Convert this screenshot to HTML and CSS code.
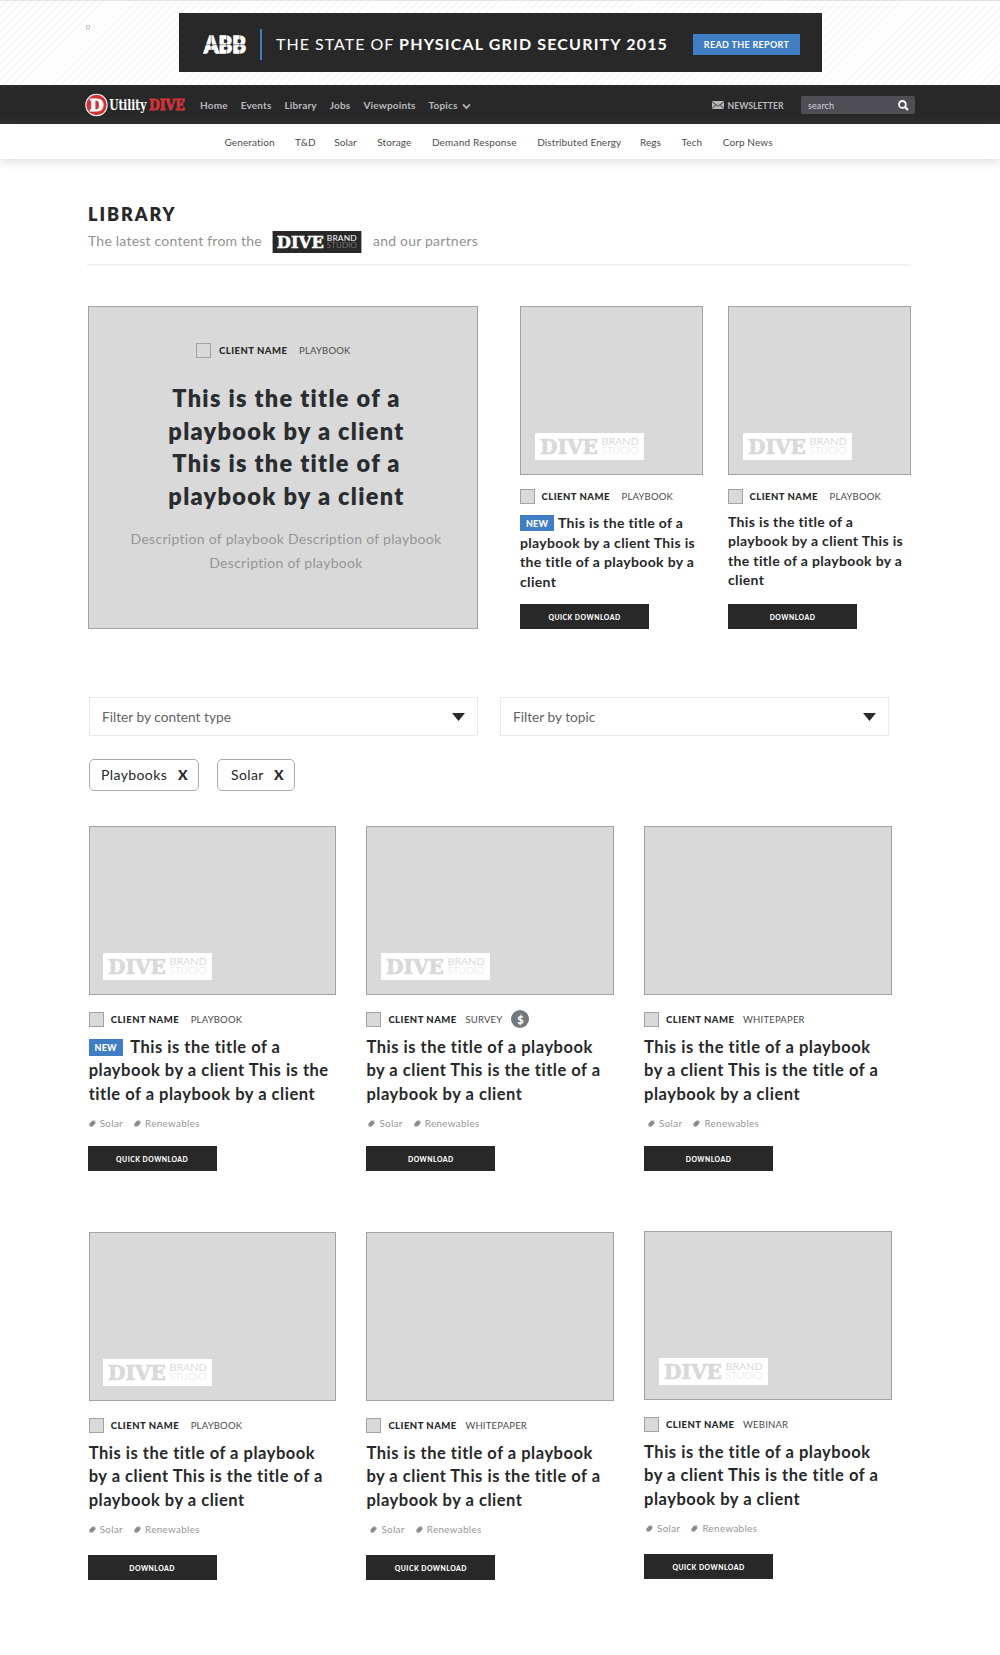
FILE: index.html
```html
<!DOCTYPE html>
<html lang="en">
<head>
<meta charset="utf-8">
<title>Utility Dive Library</title>
<link rel="stylesheet" href="styles.css">
</head>
<body>
<svg class="defs" width="0" height="0" aria-hidden="true">
  <symbol id="studio" viewBox="0 0 109 27">
    <rect class="studio-bg" width="109" height="27"/>
    <text class="studio-dive" x="5" y="20.8" textLength="58" lengthAdjust="spacingAndGlyphs">DIVE</text>
    <text class="studio-brand" x="66.5" y="12.4" textLength="37" lengthAdjust="spacingAndGlyphs">BRAND</text>
    <text class="studio-word" x="66.5" y="21.4" textLength="37" lengthAdjust="spacingAndGlyphs">STUDIO</text>
  </symbol>
  <symbol id="tag" viewBox="0 0 7 7">
    <path d="M3.2.7 6.1.4 6.6 3.1 3.6 6.5H.9L.4 5.9.6 3.4Z" fill="#858585"/>
    <circle cx="5.1" cy="1.8" r=".5" fill="#fff"/>
    <path d="M1.4 5.7 3.4 3.6" stroke="#c8c8c8" stroke-width=".4"/>
  </symbol>
</svg>

<div class="ad">
  <span class="ad-mark"></span>
  <div class="banner">
    <svg class="abb" width="44" height="19" viewBox="0 0 44 19">
      <text x="1" y="17.6" textLength="42" lengthAdjust="spacingAndGlyphs">ABB</text>
      <path d="M0 9.7H44M8.2 0V19M23.6 0V19M36.8 0V19" stroke="#282828" stroke-width=".5"/>
    </svg>
    <span class="banner-rule"></span>
    <span class="banner-text">THE STATE OF <b>PHYSICAL GRID SECURITY 2015</b></span>
    <a class="banner-btn">READ THE REPORT</a>
  </div>
</div>

<header class="topbar">
  <svg class="logo" width="101" height="24" viewBox="0 0 101 24">
    <circle cx="11.5" cy="12" r="11.2" fill="#fff"/>
    <circle cx="11.5" cy="12" r="10.2" fill="#cf3339"/>
    <text class="logo-d" x="4.6" y="18.2" textLength="14.2" lengthAdjust="spacingAndGlyphs">D</text>
    <text class="logo-utility" x="24.2" y="17.2" textLength="37.2" lengthAdjust="spacingAndGlyphs">Utility</text>
    <text class="logo-dive" x="63.9" y="17.2" textLength="36" lengthAdjust="spacingAndGlyphs">DIVE</text>
  </svg>
  <nav class="nav">
    <a>Home</a><a>Events</a><a>Library</a><a>Jobs</a><a>Viewpoints</a>
    <a class="nav-more">Topics <svg width="9" height="7" viewBox="0 0 9 7"><path d="M1 1.4 4.5 5 8 1.4" fill="none" stroke="#a9a9ac" stroke-width="2"/></svg></a>
  </nav>
  <a class="newsletter"><svg width="12" height="8" viewBox="0 0 12 8"><rect width="12" height="8" fill="#b4b4b6"/><path d="M0 .8 6 5.2 12 .8M0 7.4 4 3.8M12 7.4 8 3.8" fill="none" stroke="#282828" stroke-width=".8"/></svg>NEWSLETTER</a>
  <div class="search"><span>search</span><svg width="11" height="11" viewBox="0 0 11 11"><circle cx="4.4" cy="4.4" r="3.4" fill="none" stroke="#fff" stroke-width="1.8"/><path d="M6.9 6.9 10 10" stroke="#fff" stroke-width="2.2"/></svg></div>
</header>
<nav class="subnav">
  <a>Generation</a><a class="tight">T&amp;D</a><a>Solar</a><a>Storage</a><a class="loose">Demand Response</a><a class="tight">Distributed Energy</a><a>Regs</a><a>Tech</a><a>Corp News</a>
</nav>

<main>
  <div class="intro">
    <h1>LIBRARY</h1>
    <p><span>The latest content from the</span><svg class="studio dark" width="90" height="22"><use href="#studio"/></svg><span>and our partners</span></p>
  </div>

  <section class="featured">
    <article class="hero">
      <div class="meta"><i></i><b>CLIENT NAME</b><span>PLAYBOOK</span></div>
      <h2>This is the title of a<br>playbook by a client<br>This is the title of a<br>playbook by a client</h2>
      <p>Description of playbook Description of playbook<br>Description of playbook</p>
    </article>
    <article class="small">
      <div class="thumb"><svg class="studio" width="109" height="27"><use href="#studio"/></svg></div>
      <div class="meta"><i></i><b>CLIENT NAME</b><span>PLAYBOOK</span></div>
      <h3 class="with-new"><em>NEW</em>This is the title of a<br>playbook by a client This is<br>the title of a playbook by a<br>client</h3>
      <a class="btn">QUICK DOWNLOAD</a>
    </article>
    <article class="small">
      <div class="thumb"><svg class="studio" width="109" height="27"><use href="#studio"/></svg></div>
      <div class="meta"><i></i><b>CLIENT NAME</b><span>PLAYBOOK</span></div>
      <h3>This is the title of a<br>playbook by a client This is<br>the title of a playbook by a<br>client</h3>
      <a class="btn">DOWNLOAD</a>
    </article>
  </section>

  <section class="filters">
    <div class="select">Filter by content type<svg width="13" height="8" viewBox="0 0 13 8"><path d="M0 0H13L6.5 8Z" fill="#2b2b2b"/></svg></div>
    <div class="select">Filter by topic<svg width="13" height="8" viewBox="0 0 13 8"><path d="M0 0H13L6.5 8Z" fill="#2b2b2b"/></svg></div>
  </section>
  <div class="chips">
    <span class="chip chip-playbooks">Playbooks<b>X</b></span>
    <span class="chip chip-solar">Solar<b>X</b></span>
  </div>

  <section class="grid">
    <article class="card first">
      <div class="thumb"><svg class="studio" width="109" height="27"><use href="#studio"/></svg></div>
      <div class="meta"><i></i><b>CLIENT NAME</b><span>PLAYBOOK</span></div>
      <h3><em>NEW</em>This is the title of a<br>playbook by a client This is the<br>title of a playbook by a client</h3>
      <div class="tags"><svg width="7" height="7"><use href="#tag"/></svg><span>Solar</span><svg width="7" height="7"><use href="#tag"/></svg><span>Renewables</span></div>
      <a class="btn">QUICK DOWNLOAD</a>
    </article>
    <article class="card">
      <div class="thumb"><svg class="studio" width="109" height="27"><use href="#studio"/></svg></div>
      <div class="meta near"><i></i><b>CLIENT NAME</b><span>SURVEY</span><strong>$</strong></div>
      <h3>This is the title of a playbook<br>by a client This is the title of a<br>playbook by a client</h3>
      <div class="tags in-2"><svg width="7" height="7"><use href="#tag"/></svg><span>Solar</span><svg width="7" height="7"><use href="#tag"/></svg><span>Renewables</span></div>
      <a class="btn">DOWNLOAD</a>
    </article>
    <article class="card">
      <div class="thumb"></div>
      <div class="meta near"><i></i><b>CLIENT NAME</b><span>WHITEPAPER</span></div>
      <h3>This is the title of a playbook<br>by a client This is the title of a<br>playbook by a client</h3>
      <div class="tags in-4"><svg width="7" height="7"><use href="#tag"/></svg><span>Solar</span><svg width="7" height="7"><use href="#tag"/></svg><span>Renewables</span></div>
      <a class="btn">DOWNLOAD</a>
    </article>
    <article class="card tall first">
      <div class="thumb"><svg class="studio" width="109" height="27"><use href="#studio"/></svg></div>
      <div class="meta"><i></i><b>CLIENT NAME</b><span>PLAYBOOK</span></div>
      <h3>This is the title of a playbook<br>by a client This is the title of a<br>playbook by a client</h3>
      <div class="tags"><svg width="7" height="7"><use href="#tag"/></svg><span>Solar</span><svg width="7" height="7"><use href="#tag"/></svg><span>Renewables</span></div>
      <a class="btn">DOWNLOAD</a>
    </article>
    <article class="card tall">
      <div class="thumb"></div>
      <div class="meta near"><i></i><b>CLIENT NAME</b><span>WHITEPAPER</span></div>
      <h3>This is the title of a playbook<br>by a client This is the title of a<br>playbook by a client</h3>
      <div class="tags in-4"><svg width="7" height="7"><use href="#tag"/></svg><span>Solar</span><svg width="7" height="7"><use href="#tag"/></svg><span>Renewables</span></div>
      <a class="btn">QUICK DOWNLOAD</a>
    </article>
    <article class="card tall raised">
      <div class="thumb"><svg class="studio" width="109" height="27"><use href="#studio"/></svg></div>
      <div class="meta near"><i></i><b>CLIENT NAME</b><span>WEBINAR</span></div>
      <h3>This is the title of a playbook<br>by a client This is the title of a<br>playbook by a client</h3>
      <div class="tags in-2"><svg width="7" height="7"><use href="#tag"/></svg><span>Solar</span><svg width="7" height="7"><use href="#tag"/></svg><span>Renewables</span></div>
      <a class="btn">QUICK DOWNLOAD</a>
    </article>
  </section>
</main>
</body>
</html>
```
FILE: styles.css
```css
* { box-sizing: border-box; }
body { margin: 0; width: 1000px; height: 1655px; background: #fff; color: #262829; font-family: Lato, "Open Sans", sans-serif; white-space: nowrap; overflow: hidden; }
h1, h2, h3, p { margin: 0; }
svg { display: block; flex: none; }
.defs { position: absolute; }

/* advertisement strip */
.ad { position: relative; height: 85px; padding: 12px 0 0 179px; border-top: 1px solid #e4e4e4; background: repeating-linear-gradient(135deg, #fff 0 4.4px, #f6f6f6 4.4px 5.7px); }
.ad-mark { position: absolute; left: 86px; top: 24px; width: 4px; height: 4px; border: 1px solid #c4c4c4; }
.banner { display: flex; align-items: center; width: 643px; height: 59px; padding-left: 24px; background: #282828; color: #fff; }
.abb { margin-top: 3px; }
.abb text { font: 900 23.5px Lato, sans-serif; fill: #fff; stroke: #fff; stroke-width: 1.3px; }
.banner-rule { width: 2px; height: 31px; margin: 3px 14px 0 13px; background: #3f7dc4; }
.banner-text { margin-top: 2px; width: 417px; font-size: 16px; letter-spacing: 1px; }
.banner-text b { letter-spacing: 1.17px; }
.banner-btn { display: flex; align-items: center; justify-content: center; width: 107px; height: 21px; margin-top: 3px; background: #3f7dc4; font-size: 9px; font-weight: 700; letter-spacing: .32px; }

/* header */
.topbar { display: flex; align-items: center; height: 39px; padding: 1px 0 0 85px; background: linear-gradient(#282828 75%, #313131); color: #b9b9be; font-size: 10px; font-weight: 700; }
.logo-d { font: 700 17px "DejaVu Serif", serif; fill: #fff; stroke: #fff; stroke-width: .9px; }
.logo-utility { font: 700 14px "DejaVu Serif Condensed", "DejaVu Serif", serif; fill: #fff; }
.logo-dive { font: 700 14.5px "DejaVu Serif", serif; fill: #cf3339; stroke: #cf3339; stroke-width: .9px; }
.nav { display: flex; gap: 13px; margin-left: 14px; width: 497px; letter-spacing: .17px; }
.nav-more { display: flex; align-items: center; gap: 4px; }
.nav-more svg { margin-top: 3px; }
.newsletter { display: flex; align-items: center; gap: 4px; width: 89px; margin-left: 14.5px; font-size: 8.7px; }
.search { display: flex; align-items: center; justify-content: space-between; width: 114px; height: 18px; padding: 0 6px 0 7.5px; border-radius: 2px; background: #4f4e55; color: #d5d5d8; font-size: 9px; font-weight: 400; letter-spacing: .1px; }
.subnav { display: flex; align-items: center; gap: 20.5px; height: 35px; padding: 0 0 0 224.5px; background: #fff; box-shadow: 0 2px 10px rgba(0, 0, 0, .16); color: #4c4c4e; font-size: 10px; letter-spacing: .1px; }
.subnav .tight { margin-right: -2px; }
.subnav .loose { letter-spacing: .2px; }

/* page intro */
main { padding-left: 88px; }
.intro { width: 824px; height: 107px; margin-left: -1px; padding: 44px 0 0 1px; border-bottom: 2px solid #f2f2f2; }
h1 { font-size: 18px; line-height: 22px; font-weight: 800; letter-spacing: 1.95px; }
.intro p { display: flex; align-items: center; height: 22px; margin-top: 5.5px; color: #929292; font-size: 14px; line-height: 20px; letter-spacing: .22px; }
.intro p span { margin-bottom: 2px; }
.intro .studio { margin: 0 11px 0 10px; }

/* studio logo */
.studio { --bg: #fff; --dive: #d9d9d9; --brand: #d9d9d9; --word: #e4e4e4; }
.studio.dark { --bg: #282828; --dive: #fff; --brand: #fff; --word: #b4b4b4; }
.studio-bg { fill: var(--bg); }
.studio-dive { font: 700 20px "DejaVu Serif", serif; fill: var(--dive); stroke: var(--dive); stroke-width: .7px; }
.studio-brand { font: 400 9.2px Lato, sans-serif; fill: var(--brand); }
.studio-word { font: 300 9.2px Lato, sans-serif; fill: var(--word); }

/* shared card parts */
.meta { display: flex; align-items: center; height: 15px; font-size: 9.5px; text-align: left; }
.meta i { width: 15px; height: 15px; margin-right: 7px; border: 1px solid #a2a2a2; background: #d9d9d9; }
.meta b { width: 80px; font-weight: 900; letter-spacing: .48px; }
.meta span { color: #4a4a4a; letter-spacing: .2px; }
.meta.near b { width: 77px; }
.meta strong { display: flex; align-items: center; justify-content: center; width: 18px; height: 18px; margin-left: 9px; border-radius: 50%; background: #75787b; color: #fff; font-size: 11px; font-weight: 900; }
.thumb { display: flex; align-items: flex-end; border: 1px solid #a2a2a2; background: #d9d9d9; padding: 0 0 14px 13.5px; }
em { display: inline-flex; align-items: center; justify-content: center; height: 17px; background: #3f7dc4; color: #fff; font-size: 9px; font-style: normal; font-weight: 900; line-height: 17px; letter-spacing: .2px; vertical-align: 2px; }
.btn { display: flex; align-items: center; justify-content: center; width: 129px; height: 25px; background: #282828; color: #fff; font-size: 6.8px; font-weight: 900; letter-spacing: .5px; }

/* featured row */
.featured { display: flex; height: 323px; margin-top: 40px; }
.hero { width: 390px; height: 323px; margin-right: 42px; border: 1px solid #a2a2a2; background: #d9d9d9; padding: 36px 0 0; text-align: center; }
.hero .meta { margin-left: 107px; }
.hero .meta i { margin-right: 8px; }
.hero h2 { margin: 24px 0 0 7px; font-size: 23.5px; line-height: 32.6px; font-weight: 800; letter-spacing: 1.3px; color: #2a2d30; }
.hero p { margin: 15px 0 0 6px; font-size: 14px; line-height: 24px; letter-spacing: .3px; color: #949697; }
.small { display: flex; flex-direction: column; width: 183px; margin-right: 25px; }
.small .thumb { height: 169px; }
.small .meta { margin-top: 13.5px; }
.small .meta i { margin-right: 6.5px; }
.small h3 { margin-top: 8px; font-size: 14px; line-height: 19.5px; font-weight: 700; letter-spacing: .34px; }
.small h3.with-new { margin-top: 9.5px; }
.small em { width: 34px; height: 16px; margin: -2px 4px -2px 0; vertical-align: 1.5px; }
.small .btn { margin-top: auto; }

/* filters */
.filters { display: flex; gap: 22px; margin-top: 68px; padding-left: 1px; }
.select { display: flex; align-items: center; justify-content: space-between; width: 389px; height: 39px; padding: 0 12px; border: 1px solid #e9e9e9; color: #636363; font-size: 13.7px; }
.chips { display: flex; gap: 18px; margin-top: 23px; padding-left: 1px; }
.chip { display: flex; align-items: center; justify-content: space-between; height: 32px; padding: 0 10px 2px 11px; border: 1px solid #a9a9a9; border-radius: 5px; font-size: 14px; letter-spacing: .4px; }
.chip b { font-weight: 900; }
.chip-playbooks { width: 110px; }
.chip-solar { width: 78px; padding-left: 13px; }

/* content grid */
.grid { display: grid; grid-template-columns: 247.5px 247.5px 247.5px; column-gap: 30.2px; row-gap: 61px; margin-top: 35px; padding-left: .7px; }
.card { display: flex; flex-direction: column; height: 345px; }
.card .thumb { height: 169px; }
.card .meta { margin-top: 16.5px; }
.card h3 { height: 70.8px; margin-top: 9px; font-size: 16.5px; line-height: 23.6px; font-weight: 700; letter-spacing: .52px; }
.card em { width: 34px; margin: -3px 7.5px -3px 0; }
.tags { display: flex; align-items: center; height: 12px; margin-top: 11px; color: #969696; font-size: 9.8px; letter-spacing: .35px; }
.tags span { margin-left: 4px; }
.tags span + svg { margin-left: 11px; }
.tags.in-2 { margin-left: 2px; }
.tags.in-4 { margin-left: 4px; }
.card .btn { margin-top: auto; }
.card.first .btn { margin-left: -1px; }
.card.tall { height: 348px; }
.card.raised { margin-top: -1px; }
```
